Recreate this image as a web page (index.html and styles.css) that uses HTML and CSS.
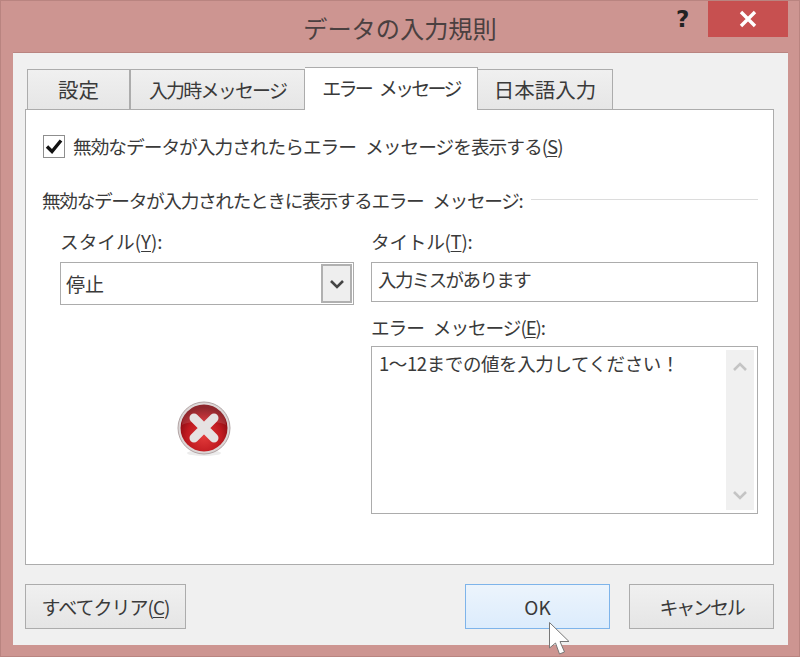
FILE: index.html
```html
<!DOCTYPE html>
<html lang="ja">
<head>
<meta charset="utf-8">
<title>データの入力規則</title>
<link rel="stylesheet" href="styles.css">
</head>
<body>
<div class="window">
  <header class="titlebar">
    <h1 class="title">データの入力規則</h1>
    <span class="help">?</span>
    <span class="close">
      <svg width="20" height="20" viewBox="0 0 20 20"><path d="M3 3L17 17M17 3L3 17" stroke="#fff" stroke-width="3.4" fill="none"/></svg>
    </span>
  </header>
  <main class="client">
    <nav class="tabs">
      <div class="tab tab-1">設定</div>
      <div class="tab tab-2">入力時メッセージ</div>
      <div class="tab tab-3 active">エラー メッセージ</div>
      <div class="tab tab-4">日本語入力</div>
    </nav>
    <section class="panel">
      <div class="check-row">
        <span class="checkbox">
          <svg width="18" height="18" viewBox="0 0 18 18"><path d="M2 9.500L7 14.500L16 3.500" stroke="#111" stroke-width="3.400" fill="none"/></svg>
        </span>
        <span>無効なデータが入力されたらエラー メッセージを表示する(<u>S</u>)</span>
      </div>
      <div class="legend"><span>無効なデータが入力されたときに表示するエラー メッセージ:</span><i class="rule"></i></div>
      <div class="columns">
        <div class="left">
          <label class="label">スタイル(<u>Y</u>):</label>
          <div class="select">
            <span class="select-value">停止</span>
            <span class="select-btn">
              <svg width="16" height="10" viewBox="0 0 16 10"><path d="M2 2L8 8L14 2" stroke="#444" stroke-width="2.600" fill="none"/></svg>
            </span>
          </div>
          <div class="icon-wrap">
            <svg width="56" height="56" viewBox="0 0 56 56">
              <defs>
                <radialGradient id="red" cx="50%" cy="68%" r="62%">
                  <stop offset="0" stop-color="#e23a3a"/>
                  <stop offset="0.6" stop-color="#c01a20"/>
                  <stop offset="1" stop-color="#7f0a10"/>
                </radialGradient>
              </defs>
              <ellipse cx="28" cy="52" rx="17" ry="3" fill="#ececec"/>
              <circle cx="28" cy="27" r="26" fill="#dcd6d6" stroke="#b3a5a5" stroke-width="1"/>
              <circle cx="28" cy="27" r="23.500" fill="url(#red)"/>
              <path d="M6 24A22 22 0 0 1 50 24C40 19 16 19 6 24Z" fill="#fff" opacity=".12"/>
              <path d="M18 17L38 37M38 17L18 37" stroke="#e6e2e2" stroke-width="9" stroke-linecap="round" fill="none"/>
            </svg>
          </div>
        </div>
        <div class="right">
          <label class="label label-title">タイトル(<u>T</u>):</label>
          <div class="field">入力ミスがあります</div>
          <label class="label label-msg">エラー メッセージ(<u>E</u>):</label>
          <div class="textarea">
            <div class="textarea-text">1～12までの値を入力してください！</div>
            <div class="scrollbar">
              <svg width="16" height="10" viewBox="0 0 16 10"><path d="M2 8L8 2L14 8" stroke="#c4c4c4" stroke-width="2.600" fill="none"/></svg>
              <svg width="16" height="10" viewBox="0 0 16 10"><path d="M2 2L8 8L14 2" stroke="#c4c4c4" stroke-width="2.600" fill="none"/></svg>
            </div>
          </div>
        </div>
      </div>
    </section>
    <footer class="buttons">
      <div class="btn btn-clear">すべてクリア(<u>C</u>)</div>
      <div class="btn btn-ok">OK</div>
      <div class="btn btn-cancel">キャンセル</div>
    </footer>
  </main>
  <svg class="cursor" width="24" height="36" viewBox="0 0 24 36">
    <path d="M1.500 1.500V27L7.500 22L11.500 33L16.500 31L12 20.500L21 20.500Z" fill="#fff" stroke="#777" stroke-width="1"/>
  </svg>
</div>
</body>
</html>
```
FILE: styles.css
```css
* { box-sizing: border-box; }
html, body { margin: 0; padding: 0; }
body {
  width: 800px;
  height: 657px;
  overflow: hidden;
  font-family: "Noto Sans CJK JP", "Noto Sans", sans-serif;
  font-size: 18px;
  color: #3a3a3a;
}
u { text-underline-offset: 2px; }
.window {
  position: relative;
  width: 800px;
  height: 657px;
  background: #cd9591;
  border: 1px solid #b98480;
  display: flex;
  flex-direction: column;
}
.titlebar {
  height: 51px;
  position: relative;
  flex: none;
  display: flex;
  justify-content: center;
}
.title {
  margin: 8px 0 0;
  font-size: 24.200px;
  font-weight: 400;
  line-height: 38px;
  color: #4a4040;
}
.help {
  position: absolute;
  left: 675px;
  top: 3px;
  font: 700 23px/30px "DejaVu Sans", sans-serif;
  color: #222;
}
.close {
  position: absolute;
  left: 707px;
  top: 0;
  width: 80px;
  height: 36px;
  background: #c75050;
  display: flex;
  align-items: center;
  justify-content: center;
}
.client {
  flex: 1;
  margin: 0 11px 11px 12px;
  background: #f0f0f0;
  border-top: 1px solid #b98480;
  padding: 16px 14px 0 12px;
  display: flex;
  flex-direction: column;
}
.tabs {
  display: flex;
  height: 40px;
  padding-left: 2px;
  align-items: flex-end;
  position: relative;
  z-index: 1;
}
.tab {
  height: 40px;
  border: 1px solid #acacac;
  border-bottom: 0;
  border-left-width: 0;
  background: linear-gradient(#f0f0f0, #e6e6e6);
  display: flex;
  align-items: center;
  justify-content: center;
  font-size: 19px;
}
.tab-1 { width: 103px; border-left-width: 1px; font-size: 20.500px; padding-bottom: 2px; }
.tab-2 { width: 175px; border-left-width: 1px; letter-spacing: -1.800px; }
.tab-3 { width: 173px; letter-spacing: -2.700px; word-spacing: 6px; }
.tab-4 { width: 135px; font-size: 20.500px; padding-bottom: 2px; }
.active {
  height: 43px;
  background: #fff;
  border-left-width: 0;
  border-bottom: 0;
  margin-bottom: -1px;
  padding-bottom: 3px;
}
.panel {
  height: 456px;
  background: #fff;
  border: 1px solid #acacac;
  padding: 0 15px 0 16px;
  display: flex;
  flex-direction: column;
}
.check-row {
  display: flex;
  align-items: center;
  gap: 8px;
  height: 24px;
  margin-top: 24px;
  font-size: 18.700px;
  line-height: 24px;
  letter-spacing: -1px;
  word-spacing: 6px;
  white-space: nowrap;
}
.checkbox {
  width: 22px;
  height: 23px;
  margin-left: 1px;
  border: 1px solid #8e8e8e;
  background: #fff;
  display: flex;
  align-items: center;
  justify-content: center;
}
.legend {
  display: flex;
  align-items: center;
  gap: 9px;
  height: 24px;
  margin-top: 29px;
  font-size: 18.700px;
  letter-spacing: -1.350px;
  word-spacing: 6px;
  white-space: nowrap;
}
.rule {
  flex: 1;
  height: 1px;
  background: #dcdcdc;
}
.columns {
  display: grid;
  grid-template-columns: 294px 387px;
  column-gap: 17px;
  padding-left: 18px;
  margin-top: 18px;
}
.label {
  display: block;
  height: 24px;
  line-height: 24px;
  font-size: 18.700px;
  margin-bottom: 9px;
  white-space: nowrap;
}
.label-title { letter-spacing: -0.300px; }
.select {
  height: 43px;
  border: 1px solid #acacac;
  background: #fff;
  display: flex;
  align-items: center;
  justify-content: space-between;
  padding: 1px;
}
.select-value {
  padding-left: 4px;
  font-size: 19px;
}
.select-btn {
  width: 31px;
  height: 39px;
  background: #eee;
  border: 2px solid #b0b0b0;
  display: flex;
  align-items: center;
  justify-content: center;
}
.icon-wrap {
  margin: 96px 0 0 116px;
  line-height: 0;
}
.field {
  height: 40px;
  border: 1px solid #acacac;
  background: #fff;
  padding-left: 6px;
  font-size: 18.500px;
  letter-spacing: -1.600px;
  line-height: 32px;
  white-space: nowrap;
}
.label-msg {
  margin-top: 13px;
  margin-bottom: 7px;
  letter-spacing: -1.100px;
  word-spacing: 6px;
}
.textarea {
  height: 168px;
  border: 1px solid #acacac;
  background: #fff;
  display: flex;
  justify-content: space-between;
  padding: 3px;
}
.textarea-text {
  padding: 0 0 0 4px;
  font-size: 18.500px;
  letter-spacing: -0.400px;
  line-height: 26px;
  white-space: nowrap;
}
.scrollbar {
  width: 28px;
  background: #f0f0f0;
  display: flex;
  flex-direction: column;
  align-items: center;
  justify-content: space-between;
  padding: 12px 0 10px;
}
.buttons {
  display: flex;
  margin-top: 19px;
}
.btn {
  height: 45px;
  border: 1px solid #acacac;
  background: linear-gradient(#f0f0f0, #e5e5e5);
  display: flex;
  align-items: center;
  justify-content: center;
  font-size: 19px;
  white-space: nowrap;
}
.btn-clear { width: 161px; letter-spacing: -1px; }
.btn-ok {
  width: 145px;
  margin-left: 279px;
  background: linear-gradient(#ecf4fc, #dcecfc);
  border-color: #7eb4ea;
}
.btn-cancel { width: 145px; margin-left: 19px; letter-spacing: -2.200px; }
.cursor {
  position: absolute;
  left: 547px;
  top: 620px;
}
```
